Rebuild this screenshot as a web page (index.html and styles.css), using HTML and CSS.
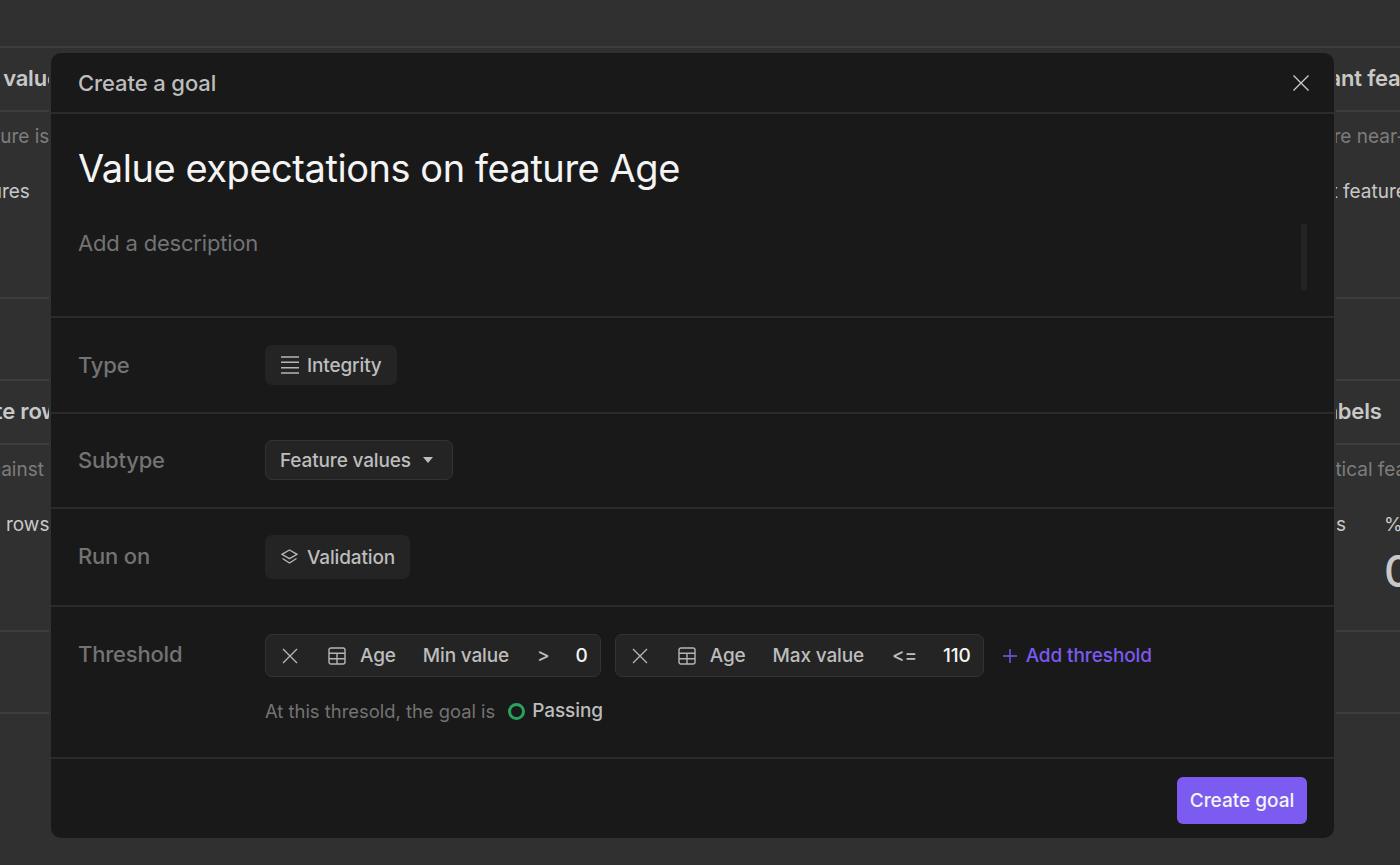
FILE: index.html
```html
<!DOCTYPE html>
<html lang="en">

<head>
    <meta charset="UTF-8">
    <meta name="viewport" content="width=device-width, initial-scale=1.0">
    <title>Create a goal</title>
    <link rel="stylesheet" href="styles.css">
</head>

<body>
    <!-- page behind the dialog -->
    <div class="page">
        <div class="topbar"></div>
        <div class="card-grid">
            <div class="card">
                <h3>Missing values</h3>
                <p class="card-desc">Each feature is valid</p>
                <div class="card-metrics">
                    <div class="metric"><span>Null features</span></div>
                </div>
            </div>
            <div class="card"></div>
            <div class="card">
                <h3>Quasi-constant features</h3>
                <p class="card-desc">Features that are near-constant</p>
                <div class="card-metrics">
                    <div class="metric"><span>Quasi-constant features</span></div>
                </div>
            </div>
            <div class="card">
                <h3>Duplicate rows</h3>
                <p class="card-desc">Check against it</p>
                <div class="card-metrics">
                    <div class="metric"><span>Duplicate rows</span></div>
                </div>
            </div>
            <div class="card"></div>
            <div class="card">
                <h3>Conflicting labels</h3>
                <p class="card-desc">Rows with identical features</p>
                <div class="card-metrics">
                    <div class="metric"><span>Conflicting rows</span></div>
                    <div class="metric"><span>%</span><strong>0</strong></div>
                </div>
            </div>
        </div>
    </div>

    <div class="modal">
        <div class="modal-header">
            <span class="modal-name">Create a goal</span>
            <svg class="close-icon" width="18" height="18" viewBox="0 0 18 18">
                <path d="M1.500 1.500l15 15M16.500 1.500l-15 15" />
            </svg>
        </div>

        <div class="modal-title">
            <h1>Value expectations on feature Age</h1>
            <div class="description">
                <span>Add a description</span>
                <div class="scroll-thumb"></div>
            </div>
        </div>

        <div class="form-row row-type">
            <div class="form-label">Type</div>
            <div class="chip chip-type">
                <svg class="icon" width="18" height="18" viewBox="0 0 18 18">
                    <path d="M0 1h18M0 6.300h18M0 11.700h18M0 17h18" />
                </svg>
                Integrity
            </div>
        </div>

        <div class="form-row row-subtype">
            <div class="form-label">Subtype</div>
            <div class="chip chip-select">
                Feature values
                <svg class="caret" width="10" height="6" viewBox="0 0 10 6">
                    <path d="M0 0h10L5 6z" />
                </svg>
            </div>
        </div>

        <div class="form-row row-run">
            <div class="form-label">Run on</div>
            <div class="chip chip-run">
                <svg class="icon" width="17" height="16" viewBox="0 0 17 16">
                    <path d="M8.500 1L16 5.300 8.500 9.600 1 5.300z" />
                    <path d="M1.500 9.500L8.500 14l7-4.500" />
                </svg>
                Validation
            </div>
        </div>

        <div class="form-row row-threshold">
            <div class="form-label">Threshold</div>
            <div class="threshold-body">
                <div class="threshold-list">
                    <div class="chip threshold">
                        <svg class="icon" width="16" height="16" viewBox="0 0 16 16">
                            <path d="M1 1l14 14M15 1L1 15" />
                        </svg>
                        <svg class="icon table-icon" width="18" height="18" viewBox="0 0 18 18">
                            <rect x="1" y="1" width="16" height="16" rx="2" />
                            <path d="M1 6.300h16M1 11.700h16M9 6.300V17" />
                        </svg>
                        <span class="th-feature">Age</span>
                        <span class="th-name">Min value</span>
                        <span class="th-op">&gt;</span>
                        <span class="th-val">0</span>
                    </div>
                    <div class="chip threshold">
                        <svg class="icon" width="16" height="16" viewBox="0 0 16 16">
                            <path d="M1 1l14 14M15 1L1 15" />
                        </svg>
                        <svg class="icon table-icon" width="18" height="18" viewBox="0 0 18 18">
                            <rect x="1" y="1" width="16" height="16" rx="2" />
                            <path d="M1 6.300h16M1 11.700h16M9 6.300V17" />
                        </svg>
                        <span class="th-feature">Age</span>
                        <span class="th-name">Max value</span>
                        <span class="th-op">&lt;=</span>
                        <span class="th-val">110</span>
                    </div>
                    <div class="add-threshold">
                        <svg width="14" height="14" viewBox="0 0 14 14">
                            <path d="M7 0v14M0 7h14" />
                        </svg>
                        Add threshold
                    </div>
                </div>
                <div class="threshold-status">
                    At this thresold, the goal is
                    <span class="status-ring"></span>
                    <span class="status-text">Passing</span>
                </div>
            </div>
        </div>

        <div class="modal-footer">
            <button class="primary-btn">Create goal</button>
        </div>
    </div>
</body>

</html>
```

FILE: styles.css
```css
* {
    box-sizing: border-box;
}

body {
    font-family: Inter, "Liberation Sans", sans-serif;
    margin: 0;
    width: 1400px;
    height: 865px;
    overflow: hidden;
    background: #303030;
    color: #d0d0d0;
}

/* background page */

.page {
    width: 1400px;
    height: 865px;
    overflow: hidden;
}

.topbar {
    height: 46px;
}

.card-grid {
    display: grid;
    grid-template-columns: repeat(3, 642px);
    margin-left: -110px;
    border-bottom: 2px solid #3d3d3d;
}

.card {
    height: 333px;
    padding: 0 26px;
    border-top: 2px solid #3d3d3d;
    position: relative;
}

.card::before {
    content: "";
    display: block;
    height: 62px;
    border-bottom: 2px solid #3d3d3d;
    margin: 0 -26px;
}

.card::after {
    content: "";
    position: absolute;
    left: 0;
    right: 0;
    top: 249px;
    border-top: 2px solid #3d3d3d;
}

.card h3 {
    position: absolute;
    top: 16px;
    margin: 0;
    font-size: 22px;
    line-height: 28px;
    letter-spacing: -0.2px;
    font-weight: 600;
    color: #c8c8c8;
}

.card-desc {
    margin: 12px 0 0;
    font-size: 19px;
    line-height: 26px;
    color: #7d7d7d;
    white-space: nowrap;
}

.card-metrics {
    display: flex;
    margin-top: 29px;
}

.metric {
    min-width: 184px;
    font-size: 19px;
    line-height: 26px;
    white-space: nowrap;
    color: #c8c8c8;
}

.metric strong {
    display: block;
    margin-top: 3px;
    font-size: 44px;
    line-height: 60px;
    font-weight: 500;
}

/* dialog */

.modal {
    position: absolute;
    left: 51px;
    top: 53px;
    width: 1283px;
    height: 785px;
    background: #191919;
    border-radius: 10px;
    box-shadow: 0 0 0 2px #303030;
}

.modal-header {
    display: flex;
    justify-content: space-between;
    align-items: center;
    height: 61px;
    padding: 0 24px 0 27px;
    border-bottom: 2px solid #2b2b2b;
}

.modal-name {
    font-size: 22px;
    letter-spacing: -0.1px;
    font-weight: 500;
    color: #bdbdbd;
}

.close-icon path {
    stroke: #c8c8c8;
    stroke-width: 1.4;
    fill: none;
}

.modal-title {
    height: 204px;
    padding: 28px 27px 0;
    border-bottom: 2px solid #2b2b2b;
}

.modal-title h1 {
    margin: 0;
    font-size: 38px;
    line-height: 52px;
    letter-spacing: -0.45px;
    font-weight: 400;
    color: #f4f4f4;
}

.description {
    display: flex;
    justify-content: space-between;
    margin-top: 35px;
    font-size: 22px;
    line-height: 28px;
    letter-spacing: -0.2px;
    color: #737373;
}

.scroll-thumb {
    width: 6px;
    height: 66px;
    margin-top: -5px;
    background: #232323;
}

.form-row {
    display: flex;
    padding: 0 27px;
    border-bottom: 2px solid #2b2b2b;
}

.row-type {
    height: 96px;
    padding-top: 27px;
}

.row-subtype {
    height: 95px;
    padding-top: 26px;
}

.row-run {
    height: 98px;
    padding-top: 26px;
}

.row-threshold {
    height: 152px;
    padding-top: 27px;
}

.form-label {
    width: 187px;
    font-size: 22px;
    line-height: 40px;
    letter-spacing: -0.2px;
    font-weight: 500;
    color: #737373;
}

.row-run .form-label {
    line-height: 42px;
}

.chip {
    display: flex;
    align-items: center;
    font-size: 19px;
    letter-spacing: -0.15px;
    font-weight: 500;
    color: #bdbdbd;
    background: #242424;
    border-radius: 7px;
}

.chip-type {
    height: 40px;
    padding: 0 15px 0 16px;
    gap: 8px;
}

.chip-select {
    height: 40px;
    padding: 0 19px 0 14px;
    gap: 12px;
    border: 1px solid #333;
}

.chip-run {
    height: 44px;
    padding: 0 15px 0 16px;
    gap: 9px;
}

.icon path,
.icon rect {
    stroke: #b5b5b5;
    stroke-width: 1.4;
    fill: none;
}

.caret path {
    fill: #bdbdbd;
}

.threshold-list {
    display: flex;
    align-items: center;
    gap: 14px;
}

.threshold {
    height: 43px;
    padding: 0 12px 0 16px;
    border: 1px solid #333;
}

.table-icon {
    margin-left: 30px;
}

.th-feature {
    margin-left: 14px;
}

.th-name {
    margin-left: 27px;
}

.th-op {
    margin-left: 28px;
}

.th-val {
    margin-left: 26px;
    color: #f4f4f4;
}

.add-threshold {
    display: flex;
    align-items: center;
    gap: 9px;
    margin-left: 5px;
    font-size: 19px;
    letter-spacing: -0.1px;
    font-weight: 500;
    color: #7a5af0;
}

.add-threshold path {
    stroke: #7a5af0;
    stroke-width: 1.4;
    fill: none;
}

.threshold-status {
    display: flex;
    align-items: center;
    margin-top: 21px;
    font-size: 18.4px;
    line-height: 26px;
    color: #737373;
}

.status-ring {
    width: 17px;
    height: 17px;
    margin-left: 13px;
    border: 3.5px solid #27a35f;
    border-radius: 50%;
}

.status-text {
    margin-left: 7px;
    font-size: 19px;
    letter-spacing: -0.1px;
    font-weight: 500;
    color: #bdbdbd;
}

.modal-footer {
    display: flex;
    justify-content: flex-end;
    padding: 18px 27px 0;
}

.primary-btn {
    height: 47px;
    width: 130px;
    padding: 0;
    font-family: inherit;
    font-size: 19px;
    font-weight: 500;
    color: #f4f4f4;
    background: #7c5cf0;
    border: none;
    border-radius: 6px;
}
```
